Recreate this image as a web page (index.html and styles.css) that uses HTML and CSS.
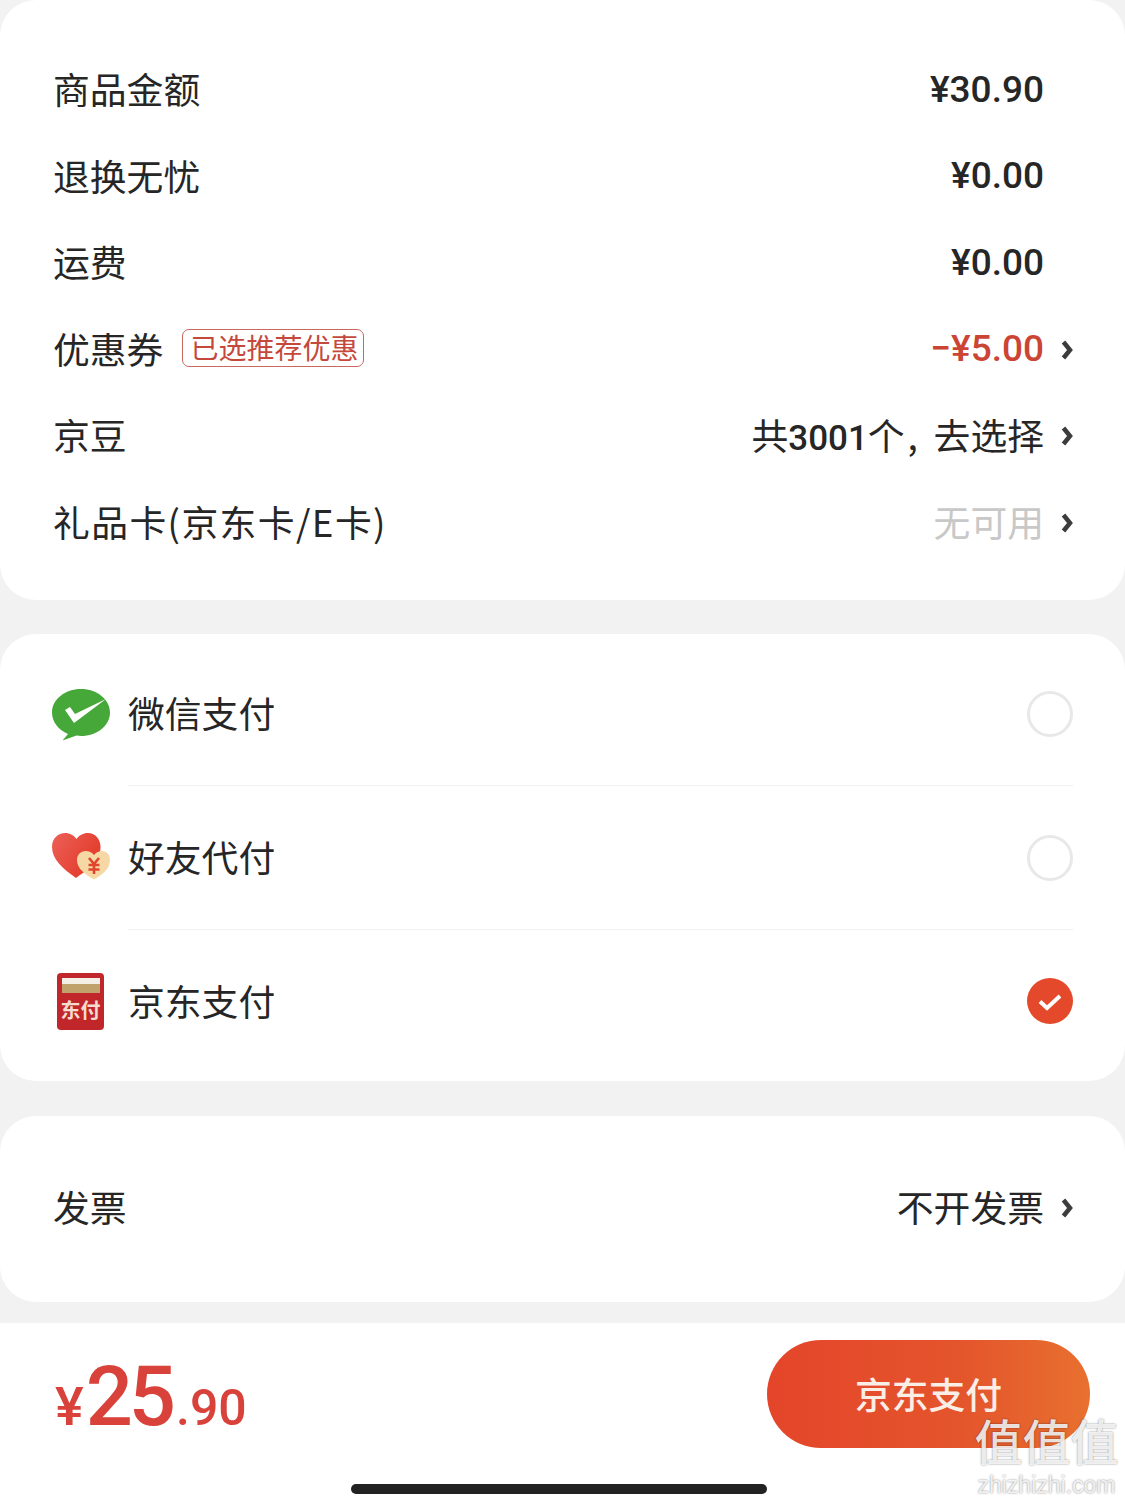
FILE: index.html
```html
<!DOCTYPE html>
<html lang="zh-CN">
<head>
    <meta charset="UTF-8">
    <title>京东支付</title>
    <link rel="stylesheet" href="styles.css">
</head>
<body>

    <!-- Amounts -->
    <section class="card card-amounts">
        <div class="row row-plain"><span class="txt">商品金额</span><span class="amount">¥30.90</span></div>
        <div class="row row-plain"><span class="txt">退换无忧</span><span class="amount">¥0.00</span></div>
        <div class="row row-plain"><span class="txt">运费</span><span class="amount">¥0.00</span></div>
        <div class="row">
            <span class="txt row-label">优惠券<span class="tag">已选推荐优惠</span></span>
            <span class="row-value"><span class="amount amount-off">−¥5.00</span><svg class="arrow" viewBox="0 0 12 22"><path d="M2.500 3 L9 11 L2.500 19"/></svg></span>
        </div>
        <div class="row">
            <span class="txt">京豆</span>
            <span class="row-value"><span class="txt">共<span class="amount-inline">3001</span>个<span class="comma">,</span>去选择</span><svg class="arrow" viewBox="0 0 12 22"><path d="M2.500 3 L9 11 L2.500 19"/></svg></span>
        </div>
        <div class="row">
            <span class="txt gift-label">礼品卡(京东卡/E卡)</span>
            <span class="row-value"><span class="txt value-muted">无可用</span><svg class="arrow" viewBox="0 0 12 22"><path d="M2.500 3 L9 11 L2.500 19"/></svg></span>
        </div>
    </section>

    <!-- Payment methods -->
    <section class="card card-pay">
        <div class="pay-row">
            <svg class="pay-icon pay-icon-wx" viewBox="0 0 58 52">
                <path fill="#47a83a" d="M29 0C13 0 0 10.500 0 23.500C0 33 6.500 41 16 45L10.500 51.500L24.500 46.600C26 46.900 27.500 47 29 47C45 47 58 36.500 58 23.500C58 10.500 45 0 29 0Z"/>
                <path fill="#fff" d="M13 21L18 18L23 25L54 10L22 34Z"/>
            </svg>
            <div class="pay-body"><span class="txt">微信支付</span><span class="radio"></span></div>
        </div>
        <div class="pay-row">
            <svg class="pay-icon" viewBox="0 0 58 52">
                <defs>
                    <linearGradient id="heart" x1="0" y1="0" x2="1" y2="0.6">
                        <stop offset="0" stop-color="#ec6058"/>
                        <stop offset="1" stop-color="#e23a28"/>
                    </linearGradient>
                </defs>
                <path fill="url(#heart)" d="M24 46C10 36 0 27 0 15C0 6 6.500 1 13 1C18 1 22 3.500 24.500 7C27 3.500 31 1 36 1C43 1 48.500 7 48.500 15C48.500 28 37 37 24 46Z"/>
                <path fill="#f6d8a4" d="M42 47.500C33 42 25 37 25 28C25 22.500 29 19 33.500 19C37 19 40 20.500 42 23C44 20.500 47 19 50.500 19C54.500 19 58 22.500 58 28C58 37 51 42 42 47.500Z"/>
                <path fill="none" stroke="#e2452d" stroke-width="2.600" d="M37 26L42 32L47 26M42 32V42M36.500 33H47.500M36.500 37.500H47.500"/>
            </svg>
            <div class="pay-body"><span class="txt">好友代付</span><span class="radio"></span></div>
        </div>
        <div class="pay-row pay-row-last">
            <div class="jd-icon">
                <span class="jd-band"></span>
                <span class="jd-label">东付</span>
            </div>
            <div class="pay-body"><span class="txt">京东支付</span><span class="radio radio-on"><svg viewBox="0 0 46 46"><path d="M13 23.500L20 30L33 18"/></svg></span></div>
        </div>
    </section>

    <!-- Invoice -->
    <section class="card card-invoice">
        <div class="row">
            <span class="txt">发票</span>
            <span class="row-value"><span class="txt">不开发票</span><svg class="arrow" viewBox="0 0 12 22"><path d="M2.500 3 L9 11 L2.500 19"/></svg></span>
        </div>
    </section>

    <!-- Bottom bar -->
    <footer class="paybar">
        <div class="total"><span class="total-yen">¥</span><span class="total-big">25</span><span class="total-small">.90</span></div>
        <button class="pay-button">京东支付</button>
    </footer>

    <div class="home-bar"></div>

    <!-- Watermark -->
    <div class="watermark">
        <div class="watermark-mark">值值值</div>
        <div class="watermark-url">zhizhizhi.com</div>
    </div>

</body>
</html>
```

FILE: styles.css
```css
body, html {
    margin: 0;
    padding: 0;
    width: 100%;
    height: 100%;
    overflow: hidden;
}

body {
    position: relative;
    background: #f2f2f2;
    color: #262626;
    font-family: "Noto Sans CJK SC", sans-serif;
    font-size: 36.800px;
}

.card {
    background: #fff;
    border-radius: 36px;
    margin-bottom: 34px;
}

.card-amounts {
    height: 600px;
    box-sizing: border-box;
    padding-top: 47px;
}

.row {
    display: flex;
    align-items: center;
    justify-content: space-between;
    height: 86.500px;
    padding: 0 52px 0 53px;
}

.row-plain {
    padding-right: 81px;
}

/* the CJK glyphs sit low in their line box */
.txt {
    padding-bottom: 4px;
}

.row-label {
    display: flex;
    align-items: center;
}

.row-value {
    display: flex;
    align-items: center;
}

.amount {
    font-family: Roboto, sans-serif;
    font-size: 37px;
    font-weight: 500;
    color: #262626;
    padding-bottom: 2px;
}

.amount-off {
    color: #cc4434;
}

.amount-inline {
    font-family: Roboto, sans-serif;
    font-size: 35px;
    font-weight: 500;
}

.comma {
    display: inline-block;
    box-sizing: border-box;
    width: 29px;
    padding-left: 3px;
    text-align: left;
}

.gift-label {
    letter-spacing: 1.400px;
}

.value-muted {
    color: #c8c8c8;
}

.arrow {
    width: 12px;
    height: 22px;
    margin-left: 17px;
    fill: none;
    stroke: #3c3c3c;
    stroke-width: 4.500;
}

.tag {
    display: inline-block;
    margin-left: 19px;
    padding: 0 5px 0 7px;
    height: 36px;
    line-height: 35px;
    border: 1px solid #c9685e;
    border-radius: 7px;
    color: #c5483c;
    font-size: 28px;
}

.card-pay {
    height: 447px;
    box-sizing: border-box;
    padding-top: 8px;
    margin-bottom: 35px;
}

.pay-row {
    display: flex;
    align-items: center;
    padding: 0 52px;
}

.pay-icon {
    width: 58px;
    height: 52px;
    margin-right: 18px;
    flex: none;
}

.pay-icon-wx {
    margin-top: 2px;
}

.pay-body {
    flex: 1;
    display: flex;
    align-items: center;
    justify-content: space-between;
    height: 143px;
    border-bottom: 1px solid #f0f0f0;
}

.pay-row-last .pay-body {
    border-bottom: none;
}

.radio {
    width: 46px;
    height: 46px;
    box-sizing: border-box;
    border: 3px solid #e8e8e8;
    border-radius: 50%;
}

.radio-on {
    margin-bottom: 2px;
    border: none;
    background: #e4492c;
}

.radio-on svg {
    display: block;
    fill: none;
    stroke: #fff;
    stroke-width: 4;
}

.jd-icon {
    display: flex;
    flex-direction: column;
    align-items: center;
    box-sizing: border-box;
    width: 47px;
    height: 57px;
    margin: 0 24px 0 5px;
    padding-top: 5px;
    flex: none;
    background: #c1272a;
    border-radius: 4px;
}

.jd-band {
    width: 38px;
    height: 15px;
    background: linear-gradient(#f3efe6 0, #f3efe6 40%, #c0a26c 40%, #c0a26c 100%);
}

.jd-label {
    margin-top: 6px;
    color: #f6dcd0;
    font-size: 20px;
    font-weight: 700;
    line-height: 22px;
}

.card-invoice {
    height: 186px;
    box-sizing: border-box;
    padding-bottom: 2px;
    display: flex;
    flex-direction: column;
    justify-content: center;
    margin-bottom: 21px;
}

.paybar {
    display: flex;
    justify-content: space-between;
    height: 176px;
    box-sizing: border-box;
    padding: 17px 35px 0 55px;
    background: #fff;
}

.total {
    height: 96px;
    padding-top: 12px;
    display: flex;
    align-items: baseline;
    font-family: Roboto, sans-serif;
    font-weight: 500;
    color: #d8423a;
    line-height: 90px;
}

.total-yen {
    font-size: 54px;
}

.total-small {
    font-size: 50px;
}

.total-big {
    font-size: 83px;
    letter-spacing: -4px;
    margin-left: 2px;
    margin-right: 4px;
}

.pay-button {
    width: 323px;
    height: 108px;
    border: none;
    border-radius: 54px;
    background: linear-gradient(90deg, #e4452a, #e4552c 60%, #e8702f);
    color: #fbeee6;
    font-family: "Noto Sans CJK SC", sans-serif;
    font-size: 36.800px;
    font-weight: 500;
    padding: 0 0 2px 0;
}

.home-bar {
    position: absolute;
    left: 351px;
    top: 1484px;
    width: 416px;
    height: 10px;
    border-radius: 5px;
    background: #222;
}

.watermark {
    position: absolute;
    left: 974px;
    top: 1404px;
    width: 145px;
    text-align: center;
    color: rgba(255, 255, 255, 0.85);
    text-shadow: 0 0 2px rgba(0, 0, 0, 0.5);
}

.watermark-mark {
    font-size: 48px;
    line-height: 70px;
    font-weight: 500;
    white-space: nowrap;
}

.watermark-url {
    font-family: "Liberation Sans", sans-serif;
    font-size: 23px;
    line-height: 22px;
}
```
